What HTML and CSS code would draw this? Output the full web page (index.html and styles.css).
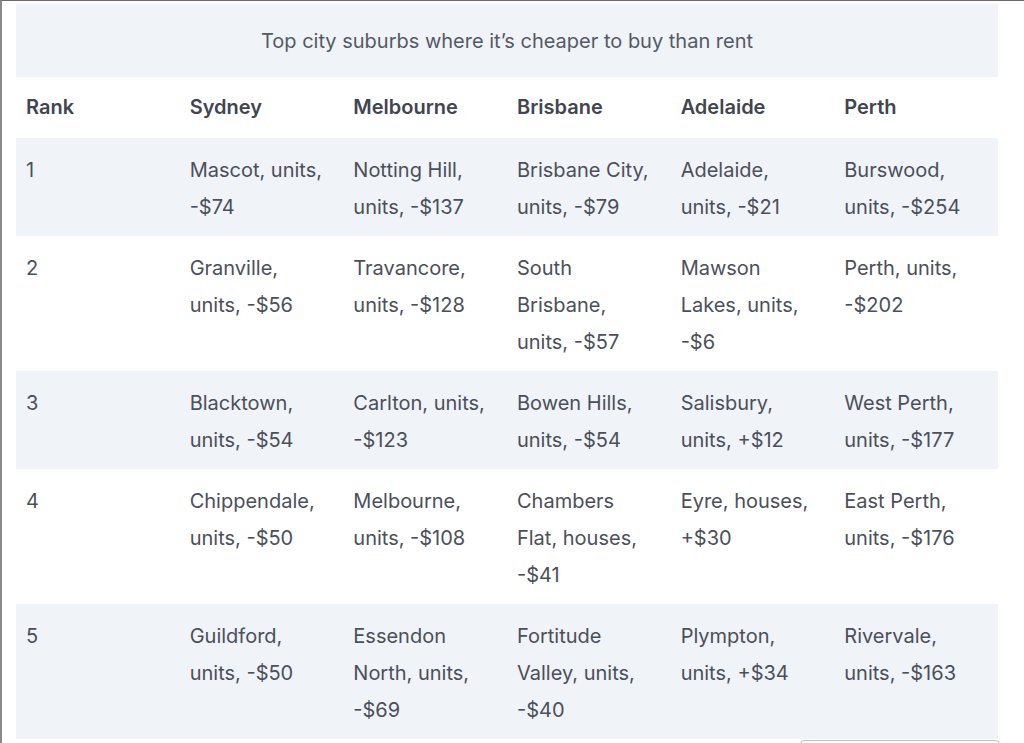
FILE: index.html
```html
<!DOCTYPE html>
<html>
<head>
<meta charset="utf-8">
<link rel="stylesheet" href="styles.css">
</head>
<body>
<div class="frame">
  <table class="suburbs">
    <caption>Top city suburbs where it’s cheaper to buy than rent</caption>
    <thead>
      <tr><th>Rank</th><th>Sydney</th><th>Melbourne</th><th>Brisbane</th><th>Adelaide</th><th>Perth</th></tr>
    </thead>
    <tbody>
      <tr class="alt"><td>1</td><td>Mascot, units, -$74</td><td>Notting Hill, units, -$137</td><td>Brisbane City, units, -$79</td><td>Adelaide, units, -$21</td><td>Burswood, units, -$254</td></tr>
      <tr><td>2</td><td>Granville, units, -$56</td><td>Travancore, units, -$128</td><td>South Brisbane, units, -$57</td><td>Mawson Lakes, units, -$6</td><td>Perth, units, -$202</td></tr>
      <tr class="alt"><td>3</td><td>Blacktown, units, -$54</td><td>Carlton, units, -$123</td><td>Bowen Hills, units, -$54</td><td>Salisbury, units, +$12</td><td>West Perth, units, -$177</td></tr>
      <tr><td>4</td><td>Chippendale, units, -$50</td><td>Melbourne, units, -$108</td><td>Chambers Flat, houses, -$41</td><td>Eyre, houses, +$30</td><td>East Perth, units, -$176</td></tr>
      <tr class="alt"><td>5</td><td>Guildford, units, -$50</td><td>Essendon North, units, -$69</td><td>Fortitude Valley, units, -$40</td><td>Plympton, units, +$34</td><td>Rivervale, units, -$163</td></tr>
    </tbody>
  </table>
  <div class="green-tab"></div>
</div>
</body>
</html>
```
FILE: styles.css
```css
html, body {
  margin: 0;
  padding: 0;
  background: #ffffff;
}
body {
  width: 1024px;
  height: 743px;
  overflow: hidden;
  font-family: Inter, "Noto Sans", sans-serif;
  color: #4a505b;
}
.frame {
  box-sizing: border-box;
  width: 1024px;
  height: 743px;
  border-top: 1px solid #6b6b6b;
  border-left: 2px solid #8a8a8a;
  padding: 3px 0 0 14px;
  position: relative;
}
.suburbs {
  width: 982px;
  border-collapse: collapse;
  table-layout: fixed;
  font-size: 20px;
}
.suburbs caption {
  background: #f0f3f7;
  height: 73px;
  line-height: 75px;
  font-size: 20px;
  color: #535a66;
  text-align: center;
  padding: 0;
}
.suburbs th {
  text-align: left;
  font-weight: 600;
  color: #3f4551;
  height: 61px;
  padding: 0 10px;
  vertical-align: middle;
  line-height: 37px;
}
.suburbs td {
  vertical-align: top;
  padding: 14px 16px 10px 10px;
  line-height: 37px;
  color: #4a505b;
}
.suburbs tr.alt td {
  background: #f0f3f7;
}
.green-tab {
  position: absolute;
  left: 798px;
  top: 739px;
  width: 198px;
  height: 20px;
  border: 1px solid #a9d3a4;
  border-radius: 4px;
  background: #fbfefb;
}
```
